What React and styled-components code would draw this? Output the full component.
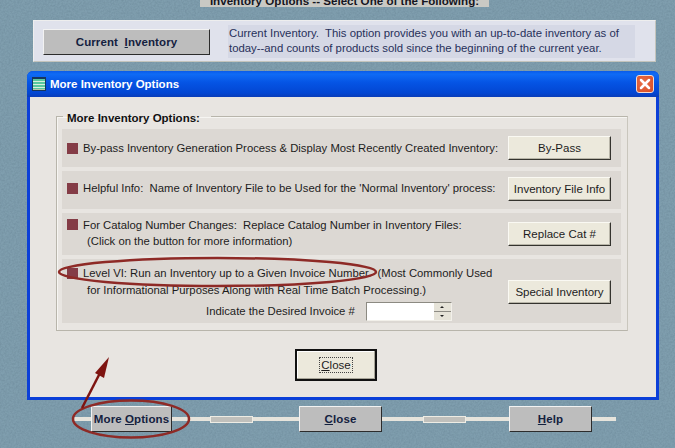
import React from 'react';
import styled, { createGlobalStyle } from 'styled-components';

const noise = `data:image/svg+xml,%3Csvg xmlns='http://www.w3.org/2000/svg' width='200' height='200'%3E%3Cfilter id='n'%3E%3CfeTurbulence type='fractalNoise' baseFrequency='0.55' numOctaves='3'/%3E%3CfeColorMatrix values='0 0 0 0 0.15 0 0 0 0 0.25 0 0 0 0 0.32 1 0 0 0 -0.3'/%3E%3C/filter%3E%3Crect width='200' height='200' filter='url(%23n)'/%3E%3C/svg%3E`;

const Global = createGlobalStyle`
	html, body {
		margin: 0;
		padding: 0;
		background: #7a99a8;
	}
	* {
		box-sizing: border-box;
	}
`;

const Page = styled.div`
	position: relative;
	width: 675px;
	height: 448px;
	overflow: hidden;
	display: flex;
	flex-direction: column;
	align-items: flex-start;
	background: #7f9eae url("${noise}");
	font-family: "Liberation Sans", Arial, sans-serif;
	font-size: 11.3px;
	color: #1c1c1c;
`;

const TopBar = styled.div`
	margin-left: 200px;
	width: 289px;
	height: 7px;
	display: flex;
	align-items: flex-end;
	justify-content: center;
	background: #c9c9c4;
	font-weight: bold;
	font-size: 11.6px;
	line-height: 12px;
	white-space: nowrap;
	color: #15151f;
`;

const InfoPanel = styled.div`
	margin: 13px 0 0 33px;
	width: 623px;
	height: 42px;
	padding: 4px 20px 3px 9px;
	display: flex;
	align-items: center;
	gap: 18px;
	background: #e0e2ec;
	border: 1px solid #eeeeee;
	border-bottom-color: #c4c4bc;
	border-right-color: #c4c4bc;
`;

const SlateButton = styled.button`
	flex: none;
	width: ${(p) => p.$w}px;
	height: ${(p) => p.$h}px;
	padding: 0;
	background: #bdbdbd;
	border: 1px solid;
	border-color: #f2f2f2 #2c2c2c #2c2c2c #f2f2f2;
	font-family: "Liberation Sans", Arial, sans-serif;
	font-weight: bold;
	font-size: 11.5px;
	letter-spacing: 0.1px;
	white-space: pre;
	color: #14213f;
`;

const InfoText = styled.p`
	margin: 0;
	flex: 1;
	align-self: stretch;
	padding: 1px 0 0 1px;
	background: #d5d8e5;
	font-size: 11.35px;
	line-height: 15px;
	white-space: pre;
	color: #27305a;
`;

const Window = styled.div`
	margin: 9px 0 0 27px;
	width: 632px;
	height: 329px;
	display: flex;
	flex-direction: column;
	border-radius: 6px 6px 0 0;
	background: #0b3fd8;
	padding: 0 3px 3px;
`;

const TitleBar = styled.div`
	flex: none;
	height: 26px;
	margin: 0 -3px;
	padding: 0 5px;
	display: flex;
	align-items: center;
	gap: 4px;
	border-radius: 6px 6px 0 0;
	background: linear-gradient(#0a5be8 0%, #0f6bf5 12%, #0554e4 45%, #0346d2 85%, #0a3cb8 100%);
	color: #fff;
	font-weight: bold;
	font-size: 11.5px;
`;

const TitleText = styled.span`
	flex: 1;
`;

const CloseBox = styled.div`
	width: 18px;
	height: 18px;
	border: 1px solid #f4dcd2;
	border-radius: 3px;
	background: radial-gradient(circle at 40% 40%, #e8704a, #d84a22);
	display: flex;
	align-items: center;
	justify-content: center;
`;

const Client = styled.div`
	flex: 1;
	background: #e8e5e1;
	padding: 12px 29px 0 26px;
	display: flex;
	flex-direction: column;
`;

const Group = styled.fieldset`
	margin: 0;
	padding: 6px 6px 6px 5px;
	width: 572px;
	height: 222px;
	min-width: 0;
	border: 1px solid #b8b5ab;
	border-right-color: #c9c6bd;
	box-shadow: inset 1px 1px 0 #f6f5f2;
	display: flex;
	flex-direction: column;
	gap: 4px;
`;

const Legend = styled.legend`
	position: relative;
	top: 2px;
	margin-left: 1px;
	padding: 0 11px 0 4px;
	font-weight: bold;
	font-size: 11.5px;
	line-height: 14px;
	color: #111;
`;

const Row = styled.div`
	flex: none;
	height: ${(p) => p.$h}px;
	padding: 0 10px ${(p) => p.$pb || 0}px 5px;
	display: flex;
	align-items: ${(p) => p.$align || 'center'};
	background: #dcd8d3;
`;

const Bullet = styled.span`
	flex: none;
	width: 11px;
	height: 11px;
	margin: ${(p) => p.$top || 0}px 5px 0 0;
	background: #843c46;
`;

const RowBody = styled.div`
	flex: 1;
	min-width: 0;
	padding-top: ${(p) => p.$top || 0}px;
	line-height: ${(p) => p.$lh || 15}px;
	white-space: pre;
`;

const Indent = styled.div`
	padding-left: 4px;
`;

const InvoiceLine = styled.div`
	margin: 3px 0 0 123px;
	display: flex;
	align-items: center;
	gap: 11px;
`;

const Spinner = styled.div`
	width: 86px;
	height: 19px;
	display: flex;
	background: #fff;
	border: 1px solid;
	border-color: #8c8a82 #f2f0ea #f2f0ea #8c8a82;
`;

const SpinInput = styled.div`
	flex: 1;
`;

const SpinButtons = styled.div`
	width: 17px;
	display: flex;
	flex-direction: column;
	gap: 1px;
	background: #8e8c85;
`;

const SpinButton = styled.div`
	flex: 1;
	background: #e6e3d8;
	display: flex;
	align-items: center;
	justify-content: center;
	&::after {
		content: "";
		border-left: 2px solid transparent;
		border-right: 2px solid transparent;
		border-${(p) => (p.$up ? 'bottom' : 'top')}: 2px solid #222;
	}
`;

const FormButton = styled.button`
	flex: none;
	width: 103px;
	height: 24px;
	margin-top: ${(p) => p.$top || 0}px;
	padding: 0;
	background: #ece9dc;
	border: 1px solid;
	border-color: #faf9f3 #34332e #34332e #faf9f3;
	box-shadow: inset -1px -1px 0 #b8b5a8;
	font-family: "Liberation Sans", Arial, sans-serif;
	font-size: 11.5px;
	white-space: nowrap;
	color: #1c1c1c;
`;

const CloseRow = styled.div`
	margin-top: 18px;
	display: flex;
	justify-content: center;
	padding-right: 11px;
	width: 100%;
`;

const DefaultButton = styled.button`
	width: 82px;
	height: 32px;
	padding: 0;
	background: #ece9dc;
	border: 2px solid #111;
	box-shadow: inset -1px -1px 0 #a8a598, inset 1px 1px 0 #fff;
	display: flex;
	align-items: center;
	justify-content: center;
	font-family: "Liberation Sans", Arial, sans-serif;
	font-size: 11.5px;
	color: #1c1c1c;
`;

const FocusBox = styled.span`
	padding: 1px 1px;
	border: 1px dotted #444;
`;

const Footer = styled.div`
	margin: 6px 0 0 73px;
	width: 543px;
	height: 26px;
	display: flex;
	align-items: center;
`;

const Wire = styled.div`
	flex: none;
	width: ${(p) => p.$w}px;
	height: 4px;
	background: #e6e4dc;
`;

const Slot = styled.div`
	flex: none;
	width: 43px;
	height: 7px;
	background: #c0c0bc;
	border: 1px solid #eeece4;
`;

const Annotations = styled.svg`
	position: absolute;
	left: 0;
	top: 0;
	pointer-events: none;
`;

function Action({ children }) {
	return <u>{children}</u>;
}

export default function App() {
	return (
		<>
			<Global />
			<Page>
				<TopBar>Inventory Options -- Select One of the Following:</TopBar>
				<InfoPanel>
					<SlateButton $w={167} $h={26}>
						Current  <Action>I</Action>nventory
					</SlateButton>
					<InfoText>
						Current Inventory.  This option provides you with an up-to-date inventory as of
						<br />
						today--and counts of products sold since the beginning of the current year.
					</InfoText>
				</InfoPanel>
				<Window>
					<TitleBar>
						<svg width="14" height="14" viewBox="0 0 14 14">
							<rect x="0" y="0" width="14" height="14" fill="#17365c" />
							<rect x="1" y="2" width="12" height="11" fill="#58c8a0" />
							<rect x="1" y="4" width="12" height="1" fill="#d8f0dc" />
							<rect x="1" y="7" width="12" height="1" fill="#d8f0dc" />
							<rect x="1" y="10" width="12" height="1" fill="#d8f0dc" />
							<rect x="1" y="12" width="12" height="1" fill="#b8c8a8" />
						</svg>
						<TitleText>More Inventory Options</TitleText>
						<CloseBox>
							<svg width="12" height="12" viewBox="0 0 12 12">
								<path d="M2 2 L10 10 M10 2 L2 10" stroke="#fff" strokeWidth="2.5" strokeLinecap="round" />
							</svg>
						</CloseBox>
					</TitleBar>
					<Client>
						<Group>
							<Legend>More Inventory Options:</Legend>
							<Row $h={38}>
								<Bullet />
								<RowBody>By-pass Inventory Generation Process &amp; Display Most Recently Created Inventory:</RowBody>
								<FormButton>By-Pass</FormButton>
							</Row>
							<Row $h={38} $pb={3}>
								<Bullet />
								<RowBody>Helpful Info:  Name of Inventory File to be Used for the 'Normal Inventory' process:</RowBody>
								<FormButton>Inventory File Info</FormButton>
							</Row>
							<Row $h={42} $align="flex-start">
								<Bullet $top={6} />
								<RowBody $top={4} $lh={16}>
									For Catalog Number Changes:  Replace Catalog Number in Inventory Files:
									<Indent>(Click on the button for more information)</Indent>
								</RowBody>
								<FormButton $top={9}>Replace Cat #</FormButton>
							</Row>
							<Row $h={64} $align="flex-start">
								<Bullet $top={9} />
								<RowBody $top={6} $lh={17}>
									Level VI: Run an Inventory up to a Given Invoice Number.  (Most Commonly Used
									<Indent>for Informational Purposes Along with Real Time Batch Processing.)</Indent>
									<InvoiceLine>
										Indicate the Desired Invoice #
										<Spinner>
											<SpinInput />
											<SpinButtons>
												<SpinButton $up />
												<SpinButton />
											</SpinButtons>
										</Spinner>
									</InvoiceLine>
								</RowBody>
								<FormButton $top={21}>Special Inventory</FormButton>
							</Row>
						</Group>
						<CloseRow>
							<DefaultButton>
								<FocusBox>
									<Action>C</Action>lose
								</FocusBox>
							</DefaultButton>
						</CloseRow>
					</Client>
				</Window>
				<Footer>
					<Wire $w={18} />
					<SlateButton $w={81} $h={26}>
						More <Action>O</Action>ptions
					</SlateButton>
					<Wire $w={38} />
					<Slot />
					<Wire $w={46} />
					<SlateButton $w={83} $h={26}>
						<Action>C</Action>lose
					</SlateButton>
					<Wire $w={41} />
					<Slot />
					<Wire $w={43} />
					<SlateButton $w={83} $h={26}>
						<Action>H</Action>elp
					</SlateButton>
					<Wire $w={24} />
				</Footer>
				<Annotations width="675" height="448" viewBox="0 0 675 448">
					<ellipse cx="217.5" cy="272" rx="158.5" ry="14" fill="none" stroke="#8e2a26" strokeWidth="2.5" />
					<ellipse cx="131" cy="419" rx="58" ry="18.5" fill="none" stroke="#8e2a26" strokeWidth="2.5" />
					<path d="M82 408 L100 373" stroke="#7e1410" strokeWidth="2.5" />
					<path d="M109 357 L95 373 L104 378 Z" fill="#7e1410" />
				</Annotations>
			</Page>
		</>
	);
}
